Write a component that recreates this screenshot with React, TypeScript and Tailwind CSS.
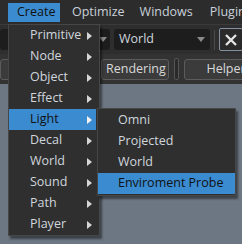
import { ReactNode } from "react";

const menuItems = ["Primitive", "Node", "Object", "Effect", "Light", "Decal", "World", "Sound", "Path", "Player"];
const lightItems = ["Omni", "Projected", "World", "Enviroment Probe"];

function Arrow({ dark }: { dark?: boolean }) {
  return (
    <svg width="5" height="8" viewBox="0 0 5 8" className="shrink-0">
      <path d="M0 0 L5 4 L0 8 Z" fill={dark ? "#f2f2f2" : "#d6d6d6"} />
    </svg>
  );
}

function ComboArrow() {
  return (
    <svg width="8" height="5" viewBox="0 0 8 5">
      <path d="M0 0 L8 0 L4 5 Z" fill="#8a8a8a" />
    </svg>
  );
}

function ToolButton({ children, className }: { children?: ReactNode; className?: string }) {
  return (
    <div
      className={`flex h-[21px] items-center rounded-[3px] border border-[#5c5c5c] bg-[#3b3b3b] px-[8px] text-[#d8d8d8] ${className ?? ""}`}
    >
      {children}
    </div>
  );
}

export default function App() {
  return (
    <div
      className="relative h-[244px] w-[242px] overflow-hidden bg-[#6d7783] text-[12.5px] leading-none"
      style={{ fontFamily: '"Open Sans", "Noto Sans", sans-serif' }}
    >
      {/* menu bar */}
      <div className="flex h-[24px] items-center whitespace-nowrap bg-[#2c2c2c] text-[#c9d0d8]">
        <div className="ml-[8px] flex h-[19px] w-[52px] shrink-0 items-center bg-[#3b8bd0] pl-[9px] text-[#111]">Create</div>
        <div className="ml-[12px]">Optimize</div>
        <div className="ml-[15px]">Windows</div>
        <div className="ml-[17px]">Plugins</div>
      </div>

      {/* toolbar row 1 */}
      <div className="flex h-[30px] items-center gap-[4px] border-t border-[#3a3a3a] bg-[#2e2e2e]">
        <div className="flex h-[21px] w-[110px] shrink-0 items-center justify-end rounded-[3px] bg-[#1d1d1d] pr-[3px]">
          <ComboArrow />
        </div>
        <div className="flex h-[21px] w-[96px] shrink-0 items-center justify-between rounded-[3px] bg-[#1d1d1d] pl-[5px] pr-[5px] text-[#cfd6dd]">
          <span>World</span>
          <ComboArrow />
        </div>
        <div className="h-[20px] w-[1px] shrink-0 bg-[#4a4a4a]" />
        <div className="flex h-[23px] w-[24px] shrink-0 items-center justify-center rounded-[2px] border border-[#8390a0] bg-[#2a2a2a]">
          <svg width="12" height="12" viewBox="0 0 12 12">
            <path d="M1 1 L11 11 M11 1 L1 11" stroke="#e4e4e4" strokeWidth="2.4" />
          </svg>
        </div>
      </div>

      {/* toolbar row 2 */}
      <div className="flex h-[30px] items-center gap-[3px] bg-[#333333]">
        <ToolButton className="w-[98px] shrink-0" />
        <ToolButton className="w-[68px] shrink-0 pl-[4px]">Rendering</ToolButton>
        <div className="mx-[2px] h-[22px] w-[5px] shrink-0 rounded-[2px] border border-[#555] bg-[#2a2a2a]" />
        <ToolButton className="w-[90px] shrink-0 justify-center">Helpers</ToolButton>
      </div>

      {/* create dropdown */}
      <div className="absolute left-[8px] top-[24px] w-[92px] border border-[#474747] bg-[#2f2f2f] shadow-[2px_3px_2px_rgba(0,0,0,0.45)]">
        {menuItems.map((item) => {
          const active = item === "Light";
          return (
            <div
              key={item}
              className={`mr-[3px] flex h-[21px] items-center justify-between pl-[21px] pr-[4px] ${
                active ? "bg-[#3b8bd0] text-[#111]" : "text-[#cfd6dd]"
              }`}
            >
              <span>{item}</span>
              <Arrow dark={active} />
            </div>
          );
        })}
      </div>

      {/* light submenu */}
      <div className="absolute left-[97px] top-[108px] w-[139px] border border-[#474747] bg-[#2f2f2f] py-[1px] shadow-[2px_3px_2px_rgba(0,0,0,0.45)]">
        {lightItems.map((item) => {
          const active = item === "Enviroment Probe";
          return (
            <div
              key={item}
              className={`flex h-[21px] items-center pl-[20px] ${active ? "bg-[#3b8bd0] text-[#111]" : "text-[#cfd6dd]"}`}
            >
              {item}
            </div>
          );
        })}
      </div>
    </div>
  );
}
